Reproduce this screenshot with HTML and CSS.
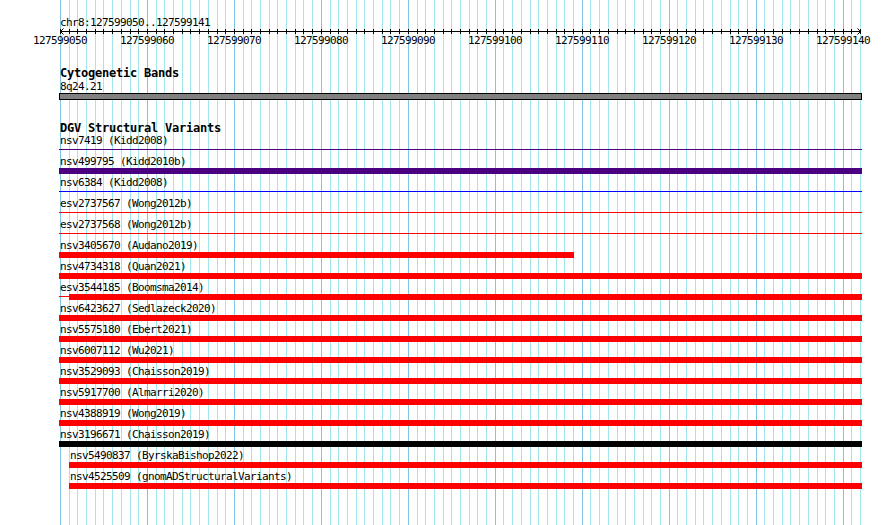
FILE: index.html
```html
<!DOCTYPE html>
<html lang="en">
<head>
    <meta charset="UTF-8">
    <title>chr8:127599050..127599141</title>
    <link rel="stylesheet" href="styles.css">
</head>
<body>
    <div class="browser">
        <!-- base grid behind every track -->
        <svg class="grid" width="890" height="525" shape-rendering="crispEdges">
            <path class="grid-minor" d="M69.5 0v525M77.5 0v525M86.5 0v525M95.5 0v525M103.5 0v525M112.5 0v525M121.5 0v525M130.5 0v525M138.5 0v525M156.5 0v525M164.5 0v525M173.5 0v525M182.5 0v525M190.5 0v525M199.5 0v525M208.5 0v525M217.5 0v525M225.5 0v525M243.5 0v525M251.5 0v525M260.5 0v525M269.5 0v525M277.5 0v525M286.5 0v525M295.5 0v525M303.5 0v525M312.5 0v525M330.5 0v525M338.5 0v525M347.5 0v525M356.5 0v525M364.5 0v525M373.5 0v525M382.5 0v525M390.5 0v525M399.5 0v525M417.5 0v525M425.5 0v525M434.5 0v525M443.5 0v525M451.5 0v525M460.5 0v525M469.5 0v525M477.5 0v525M486.5 0v525M503.5 0v525M512.5 0v525M521.5 0v525M530.5 0v525M538.5 0v525M547.5 0v525M556.5 0v525M564.5 0v525M573.5 0v525M590.5 0v525M599.5 0v525M608.5 0v525M617.5 0v525M625.5 0v525M634.5 0v525M643.5 0v525M651.5 0v525M660.5 0v525M677.5 0v525M686.5 0v525M695.5 0v525M703.5 0v525M712.5 0v525M721.5 0v525M730.5 0v525M738.5 0v525M747.5 0v525M764.5 0v525M773.5 0v525M782.5 0v525M790.5 0v525M799.5 0v525M808.5 0v525M817.5 0v525M825.5 0v525M834.5 0v525M851.5 0v525M860.5 0v525"/>
            <path class="grid-major" d="M60.5 0v525M147.5 0v525M234.5 0v525M321.5 0v525M408.5 0v525M495.5 0v525M582.5 0v525M669.5 0v525M756.5 0v525M843.5 0v525"/>
        </svg>

        <div class="tracks">
            <div class="ruler-label">chr8:127599050..127599141</div>
            <svg class="ruler" width="890" height="40">
                <g shape-rendering="crispEdges">
                    <path d="M60 4.5H861"/>
                    <path d="M60.5 2v5M69.5 2v5M77.5 2v5M86.5 2v5M95.5 2v5M103.5 2v5M112.5 2v5M121.5 2v5M130.5 2v5M138.5 2v5M147.5 2v5M156.5 2v5M164.5 2v5M173.5 2v5M182.5 2v5M190.5 2v5M199.5 2v5M208.5 2v5M217.5 2v5M225.5 2v5M234.5 2v5M243.5 2v5M251.5 2v5M260.5 2v5M269.5 2v5M277.5 2v5M286.5 2v5M295.5 2v5M303.5 2v5M312.5 2v5M321.5 2v5M330.5 2v5M338.5 2v5M347.5 2v5M356.5 2v5M364.5 2v5M373.5 2v5M382.5 2v5M390.5 2v5M399.5 2v5M408.5 2v5M417.5 2v5M425.5 2v5M434.5 2v5M443.5 2v5M451.5 2v5M460.5 2v5M469.5 2v5M477.5 2v5M486.5 2v5M495.5 2v5M503.5 2v5M512.5 2v5M521.5 2v5M530.5 2v5M538.5 2v5M547.5 2v5M556.5 2v5M564.5 2v5M573.5 2v5M582.5 2v5M590.5 2v5M599.5 2v5M608.5 2v5M617.5 2v5M625.5 2v5M634.5 2v5M643.5 2v5M651.5 2v5M660.5 2v5M669.5 2v5M677.5 2v5M686.5 2v5M695.5 2v5M703.5 2v5M712.5 2v5M721.5 2v5M730.5 2v5M738.5 2v5M747.5 2v5M756.5 2v5M764.5 2v5M773.5 2v5M782.5 2v5M790.5 2v5M799.5 2v5M808.5 2v5M817.5 2v5M825.5 2v5M834.5 2v5M843.5 2v5M851.5 2v5M860.5 2v5"/>
                </g>
                <path class="arrow" d="M63.5 1.5L60.5 4.5L63.5 7.5M857.5 1.5L860.5 4.5L857.5 7.5"/>
                <text x="60" y="17">127599050</text>
                <text x="147" y="17">127599060</text>
                <text x="234" y="17">127599070</text>
                <text x="321" y="17">127599080</text>
                <text x="408" y="17">127599090</text>
                <text x="495" y="17">127599100</text>
                <text x="582" y="17">127599110</text>
                <text x="669" y="17">127599120</text>
                <text x="756" y="17">127599130</text>
                <text x="843" y="17">127599140</text>
            </svg>

            <section class="track">
                <h2 class="track-title">Cytogenetic Bands</h2>
                <div class="band-label">8q24.21</div>
                <div class="band"></div>
            </section>

            <section class="track dgv">
                <h2 class="track-title">DGV Structural Variants</h2>

                <div class="feature">
                    <div class="feature-label">nsv7419 (Kidd2008)</div>
                    <div class="glyph"><span class="line indigo"></span></div>
                </div>
                <div class="feature">
                    <div class="feature-label">nsv499795 (Kidd2010b)</div>
                    <div class="glyph"><span class="bar indigo"></span></div>
                </div>
                <div class="feature">
                    <div class="feature-label">nsv6384 (Kidd2008)</div>
                    <div class="glyph"><span class="line blue"></span></div>
                </div>
                <div class="feature">
                    <div class="feature-label">esv2737567 (Wong2012b)</div>
                    <div class="glyph"><span class="line red"></span></div>
                </div>
                <div class="feature">
                    <div class="feature-label">esv2737568 (Wong2012b)</div>
                    <div class="glyph"><span class="line red"></span></div>
                </div>
                <div class="feature">
                    <div class="feature-label">nsv3405670 (Audano2019)</div>
                    <div class="glyph"><span class="bar red" style="width:515px"></span></div>
                </div>
                <div class="feature">
                    <div class="feature-label">nsv4734318 (Quan2021)</div>
                    <div class="glyph"><span class="bar red"></span></div>
                </div>
                <div class="feature">
                    <div class="feature-label">esv3544185 (Boomsma2014)</div>
                    <div class="glyph"><span class="line red" style="width:10px"></span><span class="bar red" style="width:793px"></span></div>
                </div>
                <div class="feature">
                    <div class="feature-label">nsv6423627 (Sedlazeck2020)</div>
                    <div class="glyph"><span class="bar red"></span></div>
                </div>
                <div class="feature">
                    <div class="feature-label">nsv5575180 (Ebert2021)</div>
                    <div class="glyph"><span class="bar red"></span></div>
                </div>
                <div class="feature">
                    <div class="feature-label">nsv6007112 (Wu2021)</div>
                    <div class="glyph"><span class="bar red"></span></div>
                </div>
                <div class="feature">
                    <div class="feature-label">nsv3529093 (Chaisson2019)</div>
                    <div class="glyph"><span class="bar red"></span></div>
                </div>
                <div class="feature">
                    <div class="feature-label">nsv5917700 (Almarri2020)</div>
                    <div class="glyph"><span class="bar red"></span></div>
                </div>
                <div class="feature">
                    <div class="feature-label">nsv4388919 (Wong2019)</div>
                    <div class="glyph"><span class="bar red"></span></div>
                </div>
                <div class="feature">
                    <div class="feature-label">nsv3196671 (Chaisson2019)</div>
                    <div class="glyph"><span class="bar black"></span></div>
                </div>
                <div class="feature" style="margin-left:69px">
                    <div class="feature-label">nsv5490837 (ByrskaBishop2022)</div>
                    <div class="glyph"><span class="bar red" style="width:793px"></span></div>
                </div>
                <div class="feature" style="margin-left:69px">
                    <div class="feature-label">nsv4525509 (gnomADStructuralVariants)</div>
                    <div class="glyph"><span class="bar red" style="width:793px"></span></div>
                </div>
            </section>
        </div>
    </div>
</body>
</html>
```

FILE: styles.css
```css
* {
    box-sizing: border-box;
}
body {
    margin: 0;
    background: #fff;
}
.browser {
    position: relative;
    width: 890px;
    height: 525px;
    overflow: hidden;
    background: #fff;
    color: #000;
    font-family: "DejaVu Sans Mono", "Liberation Mono", monospace;
    font-size: 11px;
    letter-spacing: -0.62px;
}

/* grid */
.grid {
    position: absolute;
    left: 0;
    top: 0;
}
.grid path {
    fill: none;
    stroke-width: 1;
}
.grid-minor {
    stroke: #a4e6ee;
}
.grid-major {
    stroke: #80c4e8;
}

.tracks {
    position: relative;
    padding-top: 16px;
}

/* ruler */
.ruler-label {
    margin-left: 60px;
    line-height: 13px;
    white-space: nowrap;
}
.ruler {
    display: block;
    margin-top: -2px;
}
.ruler path {
    fill: none;
    stroke: #000;
    stroke-width: 1;
}
.ruler text {
    fill: #000;
    text-anchor: middle;
    font-family: "DejaVu Sans Mono", "Liberation Mono", monospace;
    font-size: 11px;
    letter-spacing: -0.62px;
}

/* tracks */
.track-title {
    margin: 0 0 0 60px;
    font-size: 12px;
    font-weight: bold;
    letter-spacing: -0.22px;
    line-height: 13px;
    white-space: nowrap;
}
.band-label {
    margin-left: 60px;
    line-height: 13px;
}
.band {
    margin-left: 59px;
    width: 803px;
    height: 7px;
    background: #808080;
    border: 1px solid #000;
}
.dgv {
    margin-top: 22px;
}

.feature {
    margin-left: 59px;
    height: 21px;
}
.feature-label {
    padding-left: 1px;
    height: 12px;
    line-height: 12px;
    white-space: nowrap;
}
.glyph {
    display: flex;
    align-items: flex-start;
    height: 9px;
}
.bar {
    width: 803px;
    height: 6px;
}
.line {
    width: 803px;
    height: 1px;
    margin-top: 2px;
}

.indigo {
    background: #4b0082;
}
.blue {
    background: #0000ff;
}
.red {
    background: #ff0000;
}
.black {
    background: #000;
}
```
